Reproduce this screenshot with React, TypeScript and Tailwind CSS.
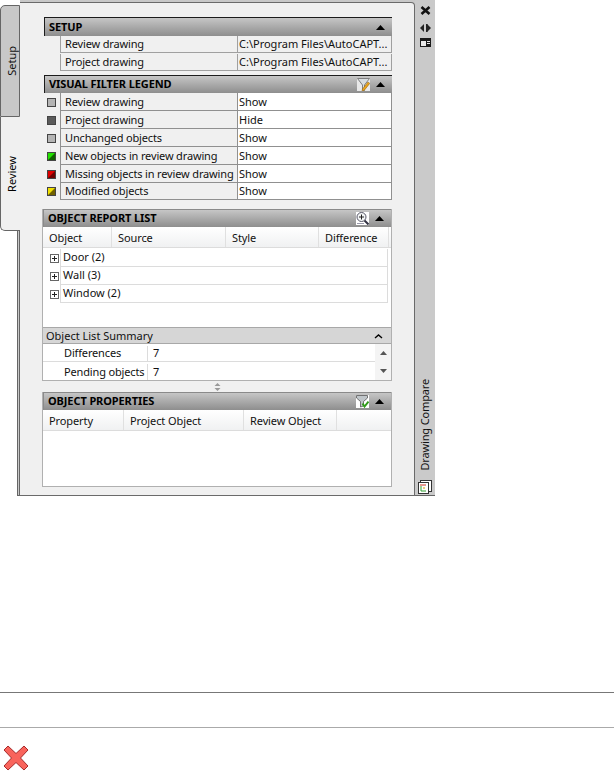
import React from "react";

const font = "font-['Noto_Sans','Liberation_Sans',sans-serif]";

const UpArrow = ({ className = "" }: { className?: string }) => (
  <svg width="9" height="5" viewBox="0 0 9 5" className={className}>
    <path d="M4.5 0 L9 5 H0 Z" fill="#000" />
  </svg>
);

const Swatch = ({ fill, corner }: { fill: string; corner?: string }) => (
  <svg width="9" height="9" viewBox="0 0 9 9">
    <rect x="0.5" y="0.5" width="8" height="8" fill={fill} stroke="#444" />
    {corner && <path d="M1 8 L8 1 V8 Z" fill={corner} />}
  </svg>
);

const FilterEditIcon = () => (
  <svg width="13" height="13" viewBox="0 0 13 13" className="bg-[#e8e8e8]">
    <path d="M0.5 0.5 H12.5 L7.5 7 V12.5 L5.5 11.5 V7 Z" fill="#d8dde0" stroke="#666" strokeWidth="0.8" />
    <path d="M5.5 11 L11 4 L12.8 5.4 L7.2 12.4 L5 12.8 Z" fill="#eaa41c" stroke="#8a5a08" strokeWidth="0.5" />
  </svg>
);

const ZoomIcon = () => (
  <svg width="13" height="13" viewBox="0 0 13 13" className="bg-white">
    <circle cx="5.5" cy="5" r="4.5" fill="#f4f6f6" stroke="#556" />
    <path d="M3 5 H8 M5.5 2.5 V7.5" stroke="#222" />
    <path d="M8.5 8.5 L12.5 12.5" stroke="#334" strokeWidth="2" />
    <path d="M1 11.5 H8" stroke="#99a" />
  </svg>
);

const FilterCheckIcon = () => (
  <svg width="13" height="13" viewBox="0 0 13 13" className="bg-white">
    <path d="M0.5 0.5 H11.5 V3 L7.5 6.5 V11 L4.5 12 V6.5 L0.5 3 Z" fill="#bfc5c9" stroke="#555" strokeWidth="0.8" />
    <path d="M6.5 8.5 L8.5 11.5 L12.5 6.5" fill="none" stroke="#2f9a18" strokeWidth="2" />
  </svg>
);

const PlusBox = () => (
  <svg width="9" height="9" viewBox="0 0 9 9">
    <rect x="0.5" y="0.5" width="8" height="8" fill="#fff" stroke="#666" />
    <path d="M2 4.5 H7 M4.5 2 V7" stroke="#222" />
  </svg>
);

const Header = ({
  title,
  dark,
  icon,
  tall,
}: {
  title: string;
  dark?: boolean;
  icon?: React.ReactNode;
  tall?: boolean;
}) => (
  <div
    className={`flex items-center justify-between ${tall ? "h-[19px]" : "h-[18px]"} bg-gradient-to-b from-[#c6c6c6] to-[#8e8e8e] pl-[4px] pr-[7px] ${
      dark ? "border-t border-l border-[#1c1c1c]" : "border-t border-l border-[#8a8a8a]"
    }`}
  >
    <span className="text-[11px] font-bold text-black tracking-[-0.1px]">{title}</span>
    <div className="flex items-center gap-[6px]">
      {icon}
      <UpArrow />
    </div>
  </div>
);

const setupRows = [
  { name: "Review drawing", value: "C:\\Program Files\\AutoCAPT...", h: "h-[17px]" },
  { name: "Project drawing", value: "C:\\Program Files\\AutoCAPT...", h: "h-[18px] pt-[1px]" },
];

const legendRows = [
  { name: "Review drawing", value: "Show", fill: "#b4b4b4", h: "h-[18px]" },
  { name: "Project drawing", value: "Hide", fill: "#5a5a5a", h: "h-[18px]" },
  { name: "Unchanged objects", value: "Show", fill: "#b4b4b4", h: "h-[18px]" },
  { name: "New objects in review drawing", value: "Show", fill: "#22e000", corner: "#106000", h: "h-[18px]" },
  { name: "Missing objects in review drawing", value: "Show", fill: "#e00000", corner: "#700000", h: "h-[18px]" },
  { name: "Modified objects", value: "Show", fill: "#f0e000", corner: "#706000", h: "h-[17px]" },
];

const SetupSection = () => (
  <div className="ml-[2px]">
    <Header title="SETUP" dark tall />
    {setupRows.map((row) => (
      <div key={row.name} className={`flex ${row.h} text-[11px] text-[#111]`}>
        <div className="w-[16px]" />
        <div className="w-[177px] flex items-center pl-[4px] border-l border-b border-[#a0a0a0] tracking-[-0.15px]">
          {row.name}
        </div>
        <div className="flex-1 flex items-center pl-[1px] border-l border-b border-r border-[#a0a0a0] bg-[#f0f0f0]">
          {row.value}
        </div>
      </div>
    ))}
  </div>
);

const LegendSection = () => (
  <div className="ml-[2px] mt-[4px]">
    <Header title="VISUAL FILTER LEGEND" dark icon={<FilterEditIcon />} />
    {legendRows.map((row) => (
      <div key={row.name} className={`flex ${row.h} text-[11px] text-[#111]`}>
        <div className="w-[16px] flex items-center pl-[3px]">
          <Swatch fill={row.fill} corner={row.corner} />
        </div>
        <div className="w-[177px] flex items-center pt-[1px] pl-[4px] whitespace-nowrap border-l border-b border-[#909090] tracking-[-0.15px]">
          {row.name}
        </div>
        <div className="flex-1 flex items-center pt-[1px] pl-[1px] bg-white border-l border-b border-r border-[#909090]">
          {row.value}
        </div>
      </div>
    ))}
  </div>
);

const ColumnHeads = ({ cols }: { cols: [string, string][] }) => (
  <div className="flex h-[21px] bg-gradient-to-b from-[#ffffff] to-[#f0f1f2] border-b border-[#dcdcdc] text-[11px] text-[#111] tracking-[-0.1px]">
    {cols.map(([label, width]) => (
      <div key={label} className={`${width} flex items-center pl-[6px] pt-[3px] border-r border-[#e0e0e0]`}>
        {label}
      </div>
    ))}
  </div>
);

const ReportSection = () => (
  <div className="mt-[9px] border border-t-0 border-[#b0b0b0]">
    <Header title="OBJECT REPORT LIST" icon={<ZoomIcon />} />
    <div className="bg-white">
      <ColumnHeads
        cols={[
          ["Object", "w-[69px]"],
          ["Source", "w-[114px]"],
          ["Style", "w-[93px]"],
          ["Difference", "w-[70px]"],
        ]}
      />
      <div className="h-[79px] pt-[1px] pl-[7px] pr-[3px]">
        {["Door (2)", "Wall (3)", "Window (2)"].map((label) => (
          <div key={label} className="flex h-[18px]">
            <div className="w-[10px] flex items-center pt-[1px]">
              <PlusBox />
            </div>
            <div className="flex-1 flex items-center pl-[2px] text-[11px] text-[#111] border-l border-b border-r border-[#dcdcdc]">
              {label}
            </div>
          </div>
        ))}
      </div>
    </div>
    <div className="flex items-center justify-between h-[17px] pt-[1px] bg-[#d6d6d6] border-t border-b border-[#a8a8a8] pl-[3px] pr-[8px] text-[11px] text-[#111]">
      <span>Object List Summary</span>
      <svg width="9" height="5" viewBox="0 0 9 5">
        <path d="M1 4 L4.5 1 L8 4" fill="none" stroke="#000" strokeWidth="1.4" />
      </svg>
    </div>
    <div className="flex bg-white">
      <div className="flex-1">
        {[
          ["Differences", "7"],
          ["Pending objects", "7"],
        ].map(([name, value], i) => (
          <div
            key={name}
            className={`flex h-[18px] pt-[2px] text-[11px] text-[#111] ${i === 0 ? "border-b border-[#dcdcdc]" : ""}`}
          >
            <div className="w-[105px] flex items-center pl-[21px] border-r border-[#dcdcdc] whitespace-nowrap tracking-[-0.15px]">
              {name}
            </div>
            <div className="flex-1 flex items-center pl-[5px]">{value}</div>
          </div>
        ))}
      </div>
      <div className="w-[16px] bg-[#f4f4f4] flex flex-col items-center justify-between py-[7px]">
        <svg width="7" height="4" viewBox="0 0 7 4"><path d="M3.5 0 L7 4 H0 Z" fill="#555" /></svg>
        <svg width="7" height="4" viewBox="0 0 7 4"><path d="M0 0 H7 L3.5 4 Z" fill="#555" /></svg>
      </div>
    </div>
  </div>
);

const PropertiesSection = () => (
  <div className="flex-1 border border-t-0 border-[#b0b0b0] bg-white flex flex-col">
    <Header title="OBJECT PROPERTIES" icon={<FilterCheckIcon />} />
    <ColumnHeads
      cols={[
        ["Property", "w-[81px]"],
        ["Project Object", "w-[120px]"],
        ["Review Object", "w-[93px]"],
      ]}
    />
  </div>
);

const SideBar = () => (
  <div className="w-[20px] bg-[#cacaca] border-b border-[#666] flex flex-col items-center">
    <svg width="11" height="9" viewBox="0 0 11 9" className="mt-[6px]">
      <path d="M1.5 1 L9.5 8 M9.5 1 L1.5 8" stroke="#111" strokeWidth="2.6" />
    </svg>
    <svg width="11" height="8" viewBox="0 0 11 8" className="mt-[9px]">
      <path d="M4 0 V8 L0 4 Z M7 0 V8 L11 4 Z" fill="#222" />
      <path d="M6 0 H7.5 V8 H6 Z" fill="#222" />
    </svg>
    <svg width="11" height="9" viewBox="0 0 11 9" className="mt-[6px]">
      <rect width="11" height="9" fill="#1a1a1a" />
      <path d="M1 3 H6 V8 H1 Z M7 3 H10 V4 H7 Z M7 5 H10 V6 H7 Z" fill="#e8e8e8" />
    </svg>
    <div className="mt-auto mb-[9px] [writing-mode:vertical-rl] rotate-180 text-[11px] text-[#111] whitespace-nowrap tracking-[-0.15px]">
      Drawing Compare
    </div>
    <svg width="14" height="14" viewBox="0 0 14 14" className="mb-[1px]">
      <rect x="2.5" y="0.5" width="11" height="11" fill="#fff" stroke="#333" />
      <rect x="0.5" y="2.5" width="10" height="11" fill="#fff" stroke="#333" />
      <path d="M2 5 H8" stroke="#d03020" />
      <path d="M3 6 V11 H8" fill="none" stroke="#30a030" />
      <path d="M5 8 H7" stroke="#d0a000" />
    </svg>
  </div>
);

const TabColumn = () => (
  <div className="w-[20px] flex flex-col pt-[5px]">
    <div className="h-[112px] bg-[#c8c8c8] border-l border-t border-b border-r border-[#666] rounded-tl-[5px] flex items-center justify-center pl-[4px]">
      <span className="[writing-mode:vertical-rl] rotate-180 text-[11px] text-[#111]">Setup</span>
    </div>
    <div className="h-[114px] bg-[#f0f0f0] border-l border-b border-[#666] rounded-bl-[5px] flex items-center justify-center pl-[4px]">
      <span className="[writing-mode:vertical-rl] rotate-180 text-[11px] text-black">Review</span>
    </div>
    <div className="flex-1 ml-[17px] bg-[#c8c8c8] border-l border-b border-r border-[#666]" />
  </div>
);

export default function App() {
  return (
    <div className={`w-[614px] h-[774px] bg-white overflow-hidden ${font}`}>
      <div className="flex w-[435px] h-[496px]">
        <TabColumn />
        <div className="flex-1 flex flex-col pt-[2px] bg-[#c8c8c8]">
          <div className="flex-1 flex flex-col bg-[#f0f0f0] border-t border-r border-b border-[#6a6a6a] rounded-tr-[4px] pl-[22px] pr-[22px] pt-[14px] pb-[8px]">
            <SetupSection />
            <LegendSection />
            <ReportSection />
            <div className="h-[11px] flex items-center justify-center">
              <svg width="7" height="8" viewBox="0 0 7 8">
                <path d="M3.5 0 L6.5 3 H0.5 Z M0.5 5 H6.5 L3.5 8 Z" fill="#999" />
              </svg>
            </div>
            <PropertiesSection />
          </div>
        </div>
        <SideBar />
      </div>
      <div className="mt-[196px] h-[1px] bg-[#777]" />
      <div className="mt-[34px] h-[1px] bg-[#aaa]" />
      <svg width="26" height="26" viewBox="0 0 26 26" className="ml-[3px] mt-[17px]">
        <path
          d="M5 1 L13 8.5 L21 1 L25 5 L17.5 13 L25 21 L21 25 L13 17.5 L5 25 L1 21 L8.5 13 L1 5 Z"
          fill="#f9645c"
          stroke="#a62a2a"
          strokeLinejoin="round"
        />
      </svg>
    </div>
  );
}
